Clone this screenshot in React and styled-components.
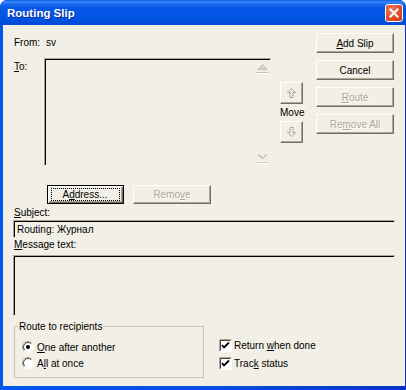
import React from 'react';
import styled, { createGlobalStyle } from 'styled-components';

const Global = createGlobalStyle`
  html, body { margin: 0; padding: 0; background: #ffffff; }
  body { font-family: "Liberation Sans", Arial, sans-serif; font-size: 10px; color: #000; }
  #root { width: 406px; height: 390px; }
`;

const FACE = '#f1efe6';

const Window = styled.div`
  width: 406px;
  height: 390px;
  box-sizing: border-box;
  display: flex;
  flex-direction: column;
  background: linear-gradient(to right, #0058ee 0, #0a4fe0 50%, #0833c8 100%);
  border-radius: 7px 7px 0 0;
  overflow: hidden;
`;

const TitleBar = styled.div`
  height: 25px;
  flex: none;
  display: flex;
  align-items: center;
  justify-content: space-between;
  padding: 0 3px 0 7px;
  background: linear-gradient(#0a5ae4 0, #3b8cf6 2px, #1b68ee 4px, #0558e6 8px, #0054e3 18px, #004ad5 25px);
`;

const TitleText = styled.span`
  color: #fff;
  font-weight: bold;
  font-size: 11.5px;
  text-shadow: 1px 1px 0 #0c2a9a;
  margin-top: 1px;
`;

const CloseButton = styled.div`
  width: 18px;
  height: 18px;
  box-sizing: border-box;
  border: 1px solid #fff;
  border-radius: 3px;
  background: radial-gradient(circle at 35% 30%, #ec7a5a 0, #dd4b26 60%, #c23a18 100%);
  display: flex;
  align-items: center;
  justify-content: center;
`;

const Body = styled.div`
  flex: 1;
  margin: 0 1px 4px 3px;
  background: ${FACE};
  padding: 8px 0 0 11px;
  display: flex;
  flex-direction: column;
`;

const TopSection = styled.div`
  display: flex;
  align-items: flex-start;
`;

const LeftCol = styled.div`
  width: 257px;
  display: flex;
  flex-direction: column;
`;

const FromRow = styled.div`
  margin-top: 3px;
  height: 13px;
  line-height: 13px;
  display: flex;
  gap: 6px;
`;

const ToRow = styled.div`
  margin-top: 9px;
  display: flex;
`;

const ToLabel = styled.div`
  width: 30px;
  padding-top: 2px;
  line-height: 13px;
`;

const Sunken = styled.div`
  box-sizing: border-box;
  border: 1px solid;
  border-color: #a7a595 ${FACE} ${FACE} #a7a595;
  box-shadow: inset 1px 1px 0 #000;
  background: ${FACE};
`;

const ListBox = styled(Sunken)`
  width: 227px;
  height: 108px;
  display: flex;
  justify-content: flex-end;
`;

const ScrollCol = styled.div`
  width: 15px;
  display: flex;
  flex-direction: column;
  justify-content: space-between;
  padding-top: 2px;
`;

const MoveCol = styled.div`
  width: 23px;
  margin-left: 9px;
  padding-top: 49px;
  display: flex;
  flex-direction: column;
`;

const MoveLabel = styled.div`
  height: 17px;
  line-height: 17px;
  text-align: center;
  white-space: nowrap;
`;

const ButtonCol = styled.div`
  margin-left: 13px;
  display: flex;
  flex-direction: column;
  gap: 7px;
`;

const Btn = styled.div`
  width: ${p => p.$w || 78}px;
  height: ${p => p.$h || 20}px;
  box-sizing: border-box;
  display: flex;
  align-items: center;
  justify-content: center;
  background: ${FACE};
  color: ${p => (p.$disabled ? '#aca899' : '#000')};
  text-shadow: ${p => (p.$disabled ? '1px 1px 0 #fff' : 'none')};
  border: 1px solid;
  border-color: ${p => (p.$default ? '#000' : '#ffffff #716f64 #716f64 #ffffff')};
  box-shadow: ${p =>
    p.$default
      ? 'inset 1px 1px 0 #fff, inset -1px -1px 0 #716f64, inset -2px -2px 0 #aca899'
      : 'inset -1px -1px 0 #aca899'};
  white-space: nowrap;
`;

const FocusRect = styled.span`
  display: flex;
  align-items: center;
  justify-content: center;
  width: 67px;
  height: 11px;
  border: 1px dotted #000;
  margin: -1px 0 0 -1px;
`;

const ActionRow = styled.div`
  margin-top: 19px;
  padding-left: 33px;
  display: flex;
  gap: 9px;
`;

const FieldLabel = styled.div`
  margin-top: ${p => p.$mt}px;
  height: 13px;
  line-height: 13px;
`;

const Field = styled(Sunken)`
  margin-top: ${p => p.$mt}px;
  margin-left: -1px;
  width: 382px;
  height: ${p => p.$h}px;
  padding: 1px 0 0 3px;
  line-height: 15px;
`;

const BottomRow = styled.div`
  margin-top: 4px;
  display: flex;
  align-items: flex-start;
`;

const GroupBox = styled.fieldset`
  width: 190px;
  box-sizing: border-box;
  margin: 0;
  padding: 6px 0 6px 3px;
  border: 1px solid #c9c6b6;
  min-width: 0;
`;

const Legend = styled.legend`
  padding: 0 1px;
  line-height: 13px;
  height: 13px;
`;

const OptionRow = styled.div`
  height: ${p => p.$h}px;
  display: flex;
  align-items: center;
  gap: ${p => p.$gap}px;
  margin-left: ${p => p.$ml || 0}px;
  white-space: nowrap;
`;

const CheckCol = styled.div`
  margin-left: 15px;
  padding-top: 16px;
  display: flex;
  flex-direction: column;
`;

const Radio = ({ checked }) => (
  <svg width="12" height="12" viewBox="0 0 12 12">
    <circle cx="6" cy="6" r="5" fill="#fff" />
    <path d="M2.1 9.9 A5.5 5.5 0 0 1 9.9 2.1" fill="none" stroke="#aca899" strokeWidth="1" />
    <path d="M2.8 9.2 A4.5 4.5 0 0 1 9.2 2.8" fill="none" stroke="#404040" strokeWidth="1" />
    <path d="M9.9 2.1 A5.5 5.5 0 0 1 2.1 9.9" fill="none" stroke="#ffffff" strokeWidth="1" />
    {checked && <circle cx="6" cy="6" r="2" fill="#000" />}
  </svg>
);

const Check = () => (
  <svg width="13" height="13" viewBox="0 0 13 13">
    <rect x="0" y="0" width="13" height="13" fill="#fff" />
    <path d="M0.5 12.5 V0.5 H12.5" fill="none" stroke="#aca899" />
    <path d="M1.5 11.5 V1.5 H11.5" fill="none" stroke="#404040" />
    <path d="M3 6 L5 8.5 L10 3.5" fill="none" stroke="#000" strokeWidth="1.8" />
  </svg>
);

const ScrollUp = () => (
  <svg width="15" height="13" viewBox="0 0 15 13">
    <polygon points="2.5,8.5 7.5,3.5 12.5,8.5" fill="#d6d3c4" stroke="#c8c5b5" strokeWidth="1" />
    <line x1="1" y1="11.5" x2="14" y2="11.5" stroke="#c8c5b5" />
    <line x1="1" y1="12.5" x2="14" y2="12.5" stroke="#ffffff" />
  </svg>
);

const ScrollDown = () => (
  <svg width="15" height="12" viewBox="0 0 15 12">
    <polyline points="3,1.5 7.5,5.5 12,1.5" fill="none" stroke="#c3c0b0" strokeWidth="1.3" />
    <polyline points="4,1.5 7.5,4.5 11,1.5" fill="none" stroke="#d6d3c4" strokeWidth="1" />
    <line x1="1" y1="9.5" x2="14" y2="9.5" stroke="#c3c0b0" strokeDasharray="1 0.5" />
    <line x1="1" y1="10.5" x2="14" y2="10.5" stroke="#ffffff" />
  </svg>
);

const ArrowUp = () => (
  <svg width="9" height="10" viewBox="0 0 9 10">
    <path d="M4.5 0.5 L8.5 4.5 L6 4.5 L6 9.5 L3 9.5 L3 4.5 L0.5 4.5 Z" fill="none" stroke="#8d8a7c" strokeWidth="1" strokeDasharray="1.5 0.6" />
  </svg>
);

const ArrowDown = () => (
  <svg width="9" height="10" viewBox="0 0 9 10">
    <path d="M4.5 9.5 L8.5 5.5 L6 5.5 L6 0.5 L3 0.5 L3 5.5 L0.5 5.5 Z" fill="none" stroke="#8d8a7c" strokeWidth="1" strokeDasharray="1.5 0.6" />
  </svg>
);

const CloseX = () => (
  <svg width="10" height="10" viewBox="0 0 10 10">
    <path d="M1.5 1.5 L8.5 8.5 M8.5 1.5 L1.5 8.5" stroke="#fff" strokeWidth="2" strokeLinecap="square" />
  </svg>
);

export default function App() {
  return (
    <>
      <Global />
      <Window>
        <TitleBar>
          <TitleText>Routing Slip</TitleText>
          <CloseButton>
            <CloseX />
          </CloseButton>
        </TitleBar>
        <Body>
          <TopSection>
            <LeftCol>
              <FromRow>
                <span>From:</span>
                <span>sv</span>
              </FromRow>
              <ToRow>
                <ToLabel>
                  <u>T</u>o:
                </ToLabel>
                <ListBox>
                  <ScrollCol>
                    <ScrollUp />
                    <ScrollDown />
                  </ScrollCol>
                </ListBox>
              </ToRow>
            </LeftCol>
            <MoveCol>
              <Btn $w={23} $h={22}>
                <ArrowUp />
              </Btn>
              <MoveLabel>Move</MoveLabel>
              <Btn $w={23} $h={22}>
                <ArrowDown />
              </Btn>
            </MoveCol>
            <ButtonCol>
              <Btn>
                <span>
                  <u>A</u>dd Slip
                </span>
              </Btn>
              <Btn>Cancel</Btn>
              <Btn $disabled>
                <span>
                  <u>R</u>oute
                </span>
              </Btn>
              <Btn $disabled>
                <span>
                  Re<u>m</u>ove All
                </span>
              </Btn>
            </ButtonCol>
          </TopSection>
          <ActionRow>
            <Btn $w={77} $h={19} $default>
              <FocusRect>
                A<u>d</u>dress...
              </FocusRect>
            </Btn>
            <Btn $w={78} $h={19} $disabled>
              <span>
                Remo<u>v</u>e
              </span>
            </Btn>
          </ActionRow>
          <FieldLabel $mt={2}>
            <u>S</u>ubject:
          </FieldLabel>
          <Field $mt={1} $h={18}>
            Routing: Журнал
          </Field>
          <FieldLabel $mt={0}>
            <u>M</u>essage text:
          </FieldLabel>
          <Field $mt={4} $h={61} />
          <BottomRow>
            <GroupBox>
              <Legend>Route to recipients</Legend>
              <OptionRow $h={16} $gap={3} $ml={4}>
                <Radio checked />
                <span>
                  <u>O</u>ne after another
                </span>
              </OptionRow>
              <OptionRow $h={16} $gap={3} $ml={4}>
                <Radio />
                <span>
                  A<u>l</u>l at once
                </span>
              </OptionRow>
            </GroupBox>
            <CheckCol>
              <OptionRow $h={18} $gap={2}>
                <Check />
                <span>
                  Return <u>w</u>hen done
                </span>
              </OptionRow>
              <OptionRow $h={18} $gap={2}>
                <Check />
                <span>
                  Trac<u>k</u> status
                </span>
              </OptionRow>
            </CheckCol>
          </BottomRow>
        </Body>
      </Window>
    </>
  );
}
